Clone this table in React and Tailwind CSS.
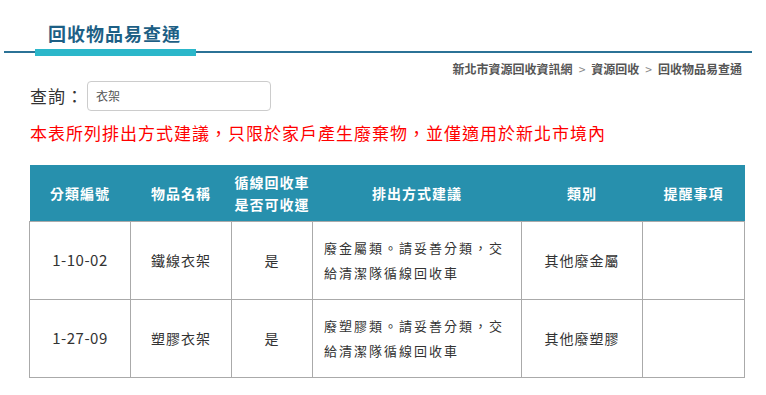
export default function App() {
  const font = { fontFamily: '"Noto Sans CJK TC", "Noto Sans", sans-serif' };
  const rows = [
    { code: "1-10-02", name: "鐵線衣架", yes: "是", desc: "廢金屬類。請妥善分類，交給清潔隊循線回收車", cat: "其他廢金屬" },
    { code: "1-27-09", name: "塑膠衣架", yes: "是", desc: "廢塑膠類。請妥善分類，交給清潔隊循線回收車", cat: "其他廢塑膠" },
  ];
  return (
    <div className="w-[766px] h-[395px] bg-white overflow-hidden" style={font}>
      <div className="pt-[20px] ml-[4px] w-[748px]">
        <div className="relative h-[36px]">
          <div className="pl-[44px] text-[18px] leading-[26px] font-bold text-[#1d5f85] tracking-[1px]">回收物品易查通</div>
          <div className="absolute left-0 right-0 bottom-[3px] h-[2px] bg-[#2b7296]"></div>
          <div className="absolute left-[31px] w-[161px] bottom-0 h-[7px] bg-[#2bb7ca]"></div>
        </div>
      </div>
      <div className="w-[742px] flex justify-end mt-[5px] text-[12px] leading-[16px] font-bold text-[#555]">
        <span>新北市資源回收資訊網</span>
        <span className="mx-[6px] font-normal text-[#888]">&gt;</span>
        <span>資源回收</span>
        <span className="mx-[6px] font-normal text-[#888]">&gt;</span>
        <span>回收物品易查通</span>
      </div>
      <div className="flex items-center pl-[30px] mt-[4px]">
        <span className="text-[17px] text-[#333] w-[57px] tracking-[1px]">查詢：</span>
        <div className="w-[184px] h-[30px] border border-[#ccc] rounded-[4px] flex items-center px-[8px] text-[12px] text-[#555]">衣架</div>
      </div>
      <div className="pl-[30px] mt-[10px] text-[17px] leading-[24px] text-[#ff0000] tracking-[1px]">
        本表所列排出方式建議，只限於家戶產生廢棄物，並僅適用於新北市境內
      </div>
      <table className="ml-[29px] mt-[20px] w-[715px] border-collapse table-fixed text-[14px] tracking-[1px]">
        <colgroup>
          <col className="w-[101px]" />
          <col className="w-[101px]" />
          <col className="w-[81px]" />
          <col className="w-[209px]" />
          <col className="w-[121px]" />
          <col className="w-[102px]" />
        </colgroup>
        <thead>
          <tr className="bg-[#2790ad] text-white font-bold h-[56px] leading-[22px]">
            <th className="font-bold">分類編號</th>
            <th className="font-bold">物品名稱</th>
            <th className="font-bold">循線回收車<br />是否可收運</th>
            <th className="font-bold">排出方式建議</th>
            <th className="font-bold">類別</th>
            <th className="font-bold">提醒事項</th>
          </tr>
        </thead>
        <tbody className="text-[#333]">
          {rows.map((r) => (
            <tr key={r.code} className="h-[78px]">
              <td className="border border-[#aaa] text-center text-[15px] tracking-[0.5px]">{r.code}</td>
              <td className="border border-[#aaa] text-center">{r.name}</td>
              <td className="border border-[#aaa] text-center">{r.yes}</td>
              <td className="border border-[#aaa] pl-[11px] pr-[8px] text-left leading-[25px] text-[13px] tracking-[2px]">{r.desc}</td>
              <td className="border border-[#aaa] text-center">{r.cat}</td>
              <td className="border border-[#aaa]"></td>
            </tr>
          ))}
        </tbody>
      </table>
    </div>
  );
}
